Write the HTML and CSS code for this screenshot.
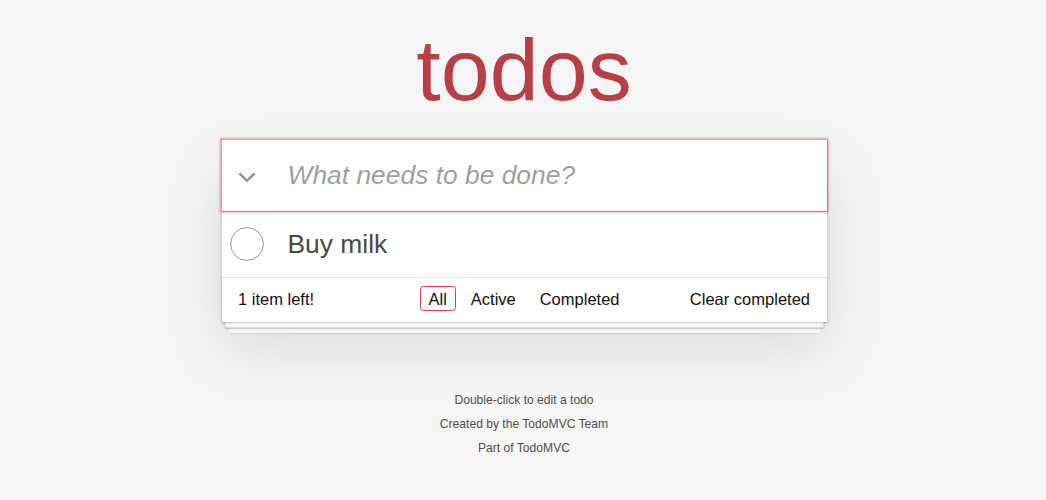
FILE: index.html
```html
<!DOCTYPE html>
<html lang="en">
<head>
<meta charset="utf-8">
<title>TodoMVC</title>
<link rel="stylesheet" href="styles.css">
</head>
<body>
<div class="page">
  <h1 class="title">todos</h1>
  <section class="todoapp">
    <header class="new-row">
      <label class="toggle-all" aria-label="Mark all as complete">
        <svg class="chevron" width="18" height="10" viewBox="0 0 18 10"><polyline points="1.3,1.3 9,8.7 16.7,1.3" fill="none" stroke="#949494" stroke-width="2.4"/></svg>
      </label>
      <input class="new-todo" placeholder="What needs to be done?">
    </header>
    <ul class="todo-list">
      <li class="todo-item">
        <span class="toggle"><svg width="36" height="36" viewBox="0 0 36 36"><circle cx="18" cy="18" r="16.4" fill="none" stroke="#949494" stroke-width="1"/></svg></span>
        <label class="todo-label">Buy milk</label>
      </li>
    </ul>
    <footer class="footer">
      <span class="todo-count">1 item left!</span>
      <ul class="filters">
        <li><a class="filter selected" href="#/">All</a></li>
        <li><a class="filter" href="#/active">Active</a></li>
        <li><a class="filter" href="#/completed">Completed</a></li>
      </ul>
      <button class="clear-completed">Clear completed</button>
    </footer>
  </section>
  <footer class="info">
    <p>Double-click to edit a todo</p>
    <p>Created by the <a class="info-link" href="#">TodoMVC Team</a></p>
    <p>Part of <a class="info-link" href="#">TodoMVC</a></p>
  </footer>
</div>
</body>
</html>
```
FILE: styles.css
```css
html {
  margin: 0;
  padding: 0;
  background: #f5f5f5;
}

body {
  margin: 0;
  padding: 0 0 0 2px;
  color: #111111;
  font: 15.4px "Liberation Sans", Arial, Helvetica, sans-serif;
  line-height: 21.56px;
}

.page {
  width: 605px;
  margin: 0 auto;
}

.title {
  margin: 25.5px 0 26.5px;
  height: 88px;
  font-size: 88px;
  line-height: 88px;
  font-weight: normal;
  text-align: center;
  color: #b83f45;
}

.todoapp {
  background: #fff;
  box-shadow: 0 2.2px 4.4px 0 rgba(0, 0, 0, 0.2), 0 27.5px 55px 0 rgba(0, 0, 0, 0.1);
}

.new-row {
  display: flex;
  align-items: center;
  height: 71px;
  box-shadow: 0 0 2.2px 2.2px #cf7d7d;
  background: rgba(0, 0, 0, 0.003);
}

.toggle-all {
  width: 51px;
  flex: none;
  display: flex;
  justify-content: center;
  align-items: center;
}

.chevron {
  display: block;
  margin-top: 3px;
}

.new-todo {
  flex: 1;
  min-width: 0;
  box-sizing: border-box;
  height: 71px;
  margin: 0;
  padding: 0 16.5px 0 15px;
  border: none;
  outline: none;
  background: transparent;
  box-shadow: inset 0 -2px 1px rgba(0, 0, 0, 0.03);
  font-family: inherit;
  font-size: 26.4px;
  color: #111111;
}

.new-todo::placeholder {
  font-style: italic;
  font-weight: 400;
  color: rgba(0, 0, 0, 0.4);
}

.todo-list {
  margin: 0;
  padding: 0;
  list-style: none;
}

.todo-item {
  display: flex;
  align-items: center;
  height: 66px;
  font-size: 26.4px;
}

.toggle {
  width: 51px;
  flex: none;
  display: flex;
  justify-content: center;
  align-items: center;
}

.toggle svg {
  display: block;
}

.todo-label {
  flex: 1;
  align-self: flex-start;
  padding: 17px 16.5px 17px 15px;
  line-height: 32px;
  color: #484848;
}

.footer {
  box-sizing: border-box;
  height: 45px;
  padding: 8px 16.5px 0;
  border-top: 1px solid #e6e6e6;
  font-size: 16.5px;
  display: grid;
  grid-template-columns: 1fr auto 1fr;
  align-items: baseline;
  box-shadow: 0 1.1px 1.1px rgba(0, 0, 0, 0.2),
    0 8.8px 0 -3.3px #f6f6f6,
    0 9.9px 1.1px -3.3px rgba(0, 0, 0, 0.2),
    0 17.6px 0 -6.6px #f6f6f6,
    0 18.7px 2.2px -6.6px rgba(0, 0, 0, 0.2);
}

.todo-count {
  justify-self: start;
  line-height: 22px;
}

.filters {
  margin: 0;
  padding: 0;
  list-style: none;
  display: flex;
  align-items: baseline;
}

.filter {
  display: inline-block;
  margin: 0 3.3px;
  padding: 4px 7.7px 2px;
  border: 1px solid transparent;
  border-radius: 3.3px;
  line-height: 17px;
  color: inherit;
  text-decoration: none;
}

.filter.selected {
  border-color: #ce4646;
}

.clear-completed {
  justify-self: end;
  margin: 0;
  padding: 0;
  border: 0;
  background: none;
  font: inherit;
  line-height: 22px;
  color: inherit;
  cursor: pointer;
}

.info {
  margin-top: 71.8px;
  display: flex;
  flex-direction: column;
  gap: 12.1px;
  color: #4d4d4d;
  font-size: 12.1px;
  text-align: center;
  text-shadow: 0 1px 0 rgba(255, 255, 255, 0.5);
}

.info p {
  margin: 0;
  line-height: 1;
}

.info-link {
  color: inherit;
  text-decoration: none;
}
```
